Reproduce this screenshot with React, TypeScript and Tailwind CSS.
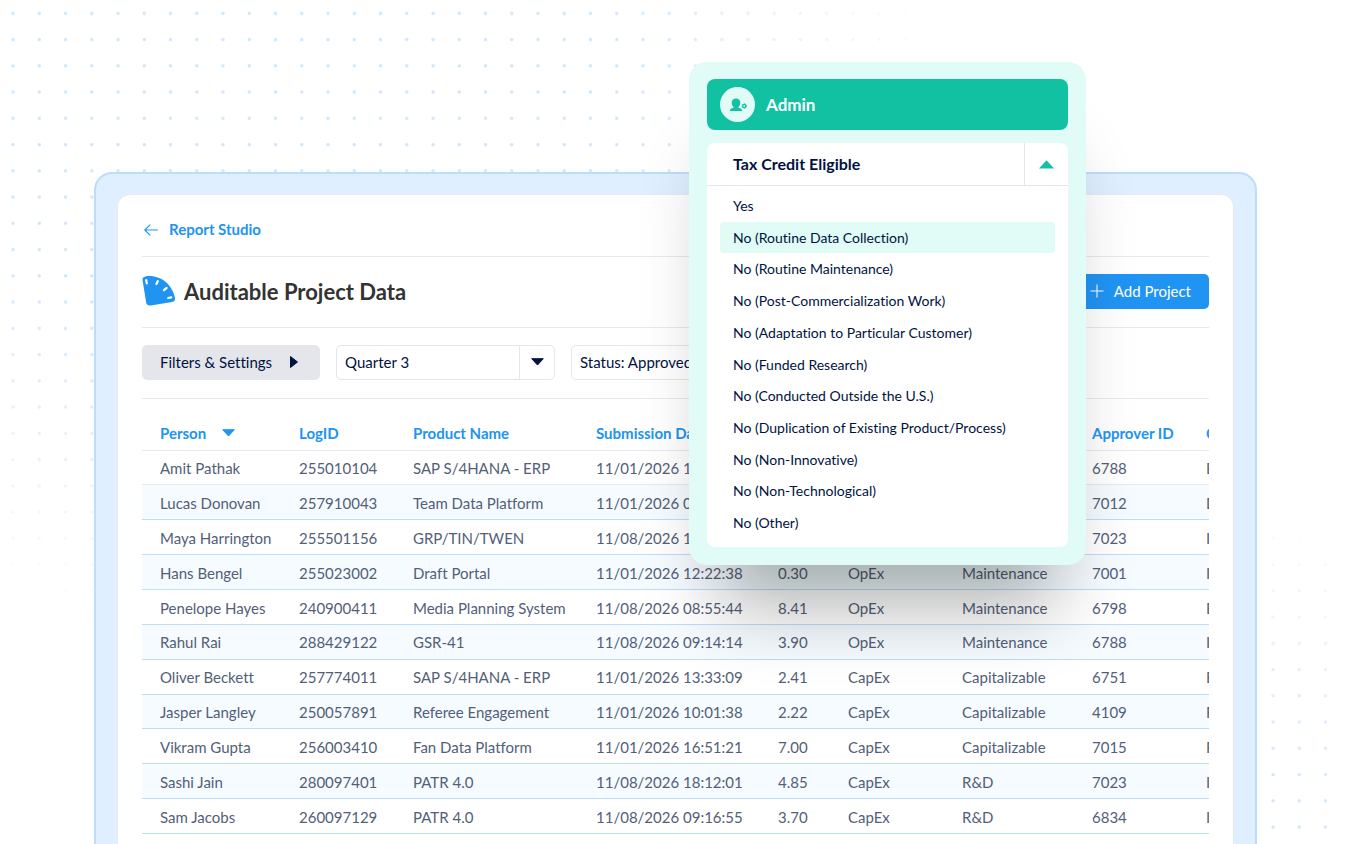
import { useState } from 'react';

type Row = {
  person: string;
  logId: string;
  product: string;
  submitted: string;
  hours?: string;
  expense?: string;
  category?: string;
  approver: string;
  region: string;
};

const rows: Row[] = [
  { person: 'Amit Pathak', logId: '255010104', product: 'SAP S/4HANA - ERP', submitted: '11/01/2026 1', approver: '6788', region: 'E' },
  { person: 'Lucas Donovan', logId: '257910043', product: 'Team Data Platform', submitted: '11/01/2026 0', approver: '7012', region: 'D' },
  { person: 'Maya Harrington', logId: '255501156', product: 'GRP/TIN/TWEN', submitted: '11/08/2026 1', approver: '7023', region: 'I' },
  { person: 'Hans Bengel', logId: '255023002', product: 'Draft Portal', submitted: '11/01/2026 12:22:38', hours: '0.30', expense: 'OpEx', category: 'Maintenance', approver: '7001', region: 'I' },
  { person: 'Penelope Hayes', logId: '240900411', product: 'Media Planning System', submitted: '11/08/2026 08:55:44', hours: '8.41', expense: 'OpEx', category: 'Maintenance', approver: '6798', region: 'E' },
  { person: 'Rahul Rai', logId: '288429122', product: 'GSR-41', submitted: '11/08/2026 09:14:14', hours: '3.90', expense: 'OpEx', category: 'Maintenance', approver: '6788', region: 'I' },
  { person: 'Oliver Beckett', logId: '257774011', product: 'SAP S/4HANA - ERP', submitted: '11/01/2026 13:33:09', hours: '2.41', expense: 'CapEx', category: 'Capitalizable', approver: '6751', region: 'E' },
  { person: 'Jasper Langley', logId: '250057891', product: 'Referee Engagement', submitted: '11/01/2026 10:01:38', hours: '2.22', expense: 'CapEx', category: 'Capitalizable', approver: '4109', region: 'F' },
  { person: 'Vikram Gupta', logId: '256003410', product: 'Fan Data Platform', submitted: '11/01/2026 16:51:21', hours: '7.00', expense: 'CapEx', category: 'Capitalizable', approver: '7015', region: 'F' },
  { person: 'Sashi Jain', logId: '280097401', product: 'PATR 4.0', submitted: '11/08/2026 18:12:01', hours: '4.85', expense: 'CapEx', category: 'R&D', approver: '7023', region: 'I' },
  { person: 'Sam Jacobs', logId: '260097129', product: 'PATR 4.0', submitted: '11/08/2026 09:16:55', hours: '3.70', expense: 'CapEx', category: 'R&D', approver: '6834', region: 'I' },
];

const eligibility = [
  'Yes',
  'No (Routine Data Collection)',
  'No (Routine Maintenance)',
  'No (Post-Commercialization Work)',
  'No (Adaptation to Particular Customer)',
  'No (Funded Research)',
  'No (Conducted Outside the U.S.)',
  'No (Duplication of Existing Product/Process)',
  'No (Non-Innovative)',
  'No (Non-Technological)',
  'No (Other)',
];

export default function App() {
  return (
    <main className="relative flex min-h-screen flex-col overflow-hidden bg-white pt-[172px] pr-[93px] pl-[94px] font-['Lato',sans-serif] text-[#00133f] [font-variant-ligatures:none]">
      <DotGrid />

      <section className="relative flex flex-1 flex-col rounded-t-[18px] border-2 border-b-0 border-[#bbdefb] bg-[#dfefff] px-[21px] pt-5">
        <div className="flex-1 rounded-t-[13px] border border-b-0 border-[#e8eaee] bg-white px-6">
          <nav className="flex h-[62px] items-center border-b border-[#e8e9ec] pt-2">
            <a href="#reports" className="flex items-center gap-[10px] text-[15px] font-bold text-[#2094f3]">
              <BackIcon />
              Report Studio
            </a>
          </nav>

          <header className="flex h-[71px] items-center justify-between border-b border-[#e8e9ec] pb-0.5">
            <h1 className="flex items-center gap-2 text-[22px] font-bold text-[#333333]">
              <GaugeIcon />
              Auditable Project Data
            </h1>
            <button
              type="button"
              className="flex h-[35px] items-center gap-[10px] rounded-[5px] bg-[#2094f3] px-[18px] text-[15px] text-white"
            >
              <PlusIcon />
              Add Project
            </button>
          </header>

          <div className="flex h-[71px] items-center gap-4 border-b border-[#e8e9ec] pb-0.5">
            <button
              type="button"
              className="flex h-[35px] w-[178px] items-center justify-between rounded-[5px] bg-[#e5e6eb] pr-[22px] pl-[18px] text-[15px]"
            >
              Filters &amp; Settings
              <svg width="8" height="12" viewBox="0 0 8 12" aria-hidden="true">
                <path d="M0.5 0.5 L7.5 6 L0.5 11.5 Z" fill="#00133f" stroke="#00133f" strokeLinejoin="round" />
              </svg>
            </button>
            <FilterSelect label="Period" value="Quarter 3" />
            <FilterSelect label="Status" value="Status: Approved" />
          </div>

          <div className="overflow-hidden">
            <ProjectTable />
          </div>
        </div>
      </section>

      <EligibilityMenu />
    </main>
  );
}

function FilterSelect({ label, value }: { label: string; value: string }) {
  return (
    <div className="relative flex h-[35px] w-[219px] items-stretch rounded-[5px] border border-[#e5e6eb] bg-white">
      <select aria-label={label} className="w-full appearance-none bg-transparent pl-2 text-[15px] outline-none">
        <option>{value}</option>
      </select>
      <span className="pointer-events-none absolute inset-y-0 right-0 flex w-[35px] items-center justify-center border-l border-[#e5e6eb]">
        <CaretDown className="text-[#00133f]" />
      </span>
    </div>
  );
}

function ProjectTable() {
  return (
    <table className="h-[435px] w-[1230px] table-fixed border-collapse text-left text-[15px] whitespace-nowrap text-[#535e78]">
      <colgroup>
        <col className="w-[157px]" />
        <col className="w-[114px]" />
        <col className="w-[183px]" />
        <col className="w-[182px]" />
        <col className="w-[70px]" />
        <col className="w-[114px]" />
        <col className="w-[130px]" />
        <col className="w-[114px]" />
        <col />
      </colgroup>
      <thead>
        <tr className="h-[51px] border-b border-[#e8e9ec] text-[#2094f3] *:pt-[18px] *:font-bold">
          <th className="pl-[18px]" aria-sort="descending">
            <button type="button" className="flex items-center gap-4">
              Person
              <CaretDown className="text-[#2094f3]" />
            </button>
          </th>
          <th>LogID</th>
          <th>Product Name</th>
          <th>Submission Date</th>
          <th />
          <th />
          <th />
          <th>Approver ID</th>
          <th>C</th>
        </tr>
      </thead>
      <tbody>
        {rows.map((row) => (
          <tr
            key={row.logId}
            className="h-[34px] border-b border-[#bbdefb] *:pt-0.5 first:border-[#e8e9ec] even:bg-[#f5fbff]"
          >
            <td className="pl-[18px]">{row.person}</td>
            <td>{row.logId}</td>
            <td>{row.product}</td>
            <td>{row.submitted}</td>
            <td>{row.hours}</td>
            <td>{row.expense}</td>
            <td>{row.category}</td>
            <td>{row.approver}</td>
            <td>{row.region}</td>
          </tr>
        ))}
      </tbody>
    </table>
  );
}

function EligibilityMenu() {
  const [selected, setSelected] = useState(eligibility[1]);

  return (
    <aside className="absolute top-[62px] left-1/2 ml-[14px] w-[397px] rounded-[18px] bg-[#e1fbf6] px-[18px] pt-[17px] pb-[18px] shadow-[0_70px_70px_-30px_rgba(0,10,5,0.32)]">
      <div className="flex h-[51px] items-center gap-[11px] rounded-lg bg-[#12c1a2] px-[13px]">
        <span className="flex size-[35px] items-center justify-center rounded-full bg-[#e1fbf6]">
          <AdminIcon />
        </span>
        <h2 className="text-[17px] font-bold text-white">Admin</h2>
      </div>

      <div className="mt-[13px] rounded-lg bg-white">
        <button
          type="button"
          aria-expanded="true"
          className="flex h-[43px] w-full items-stretch border-b border-[#e5e6eb] text-left"
        >
          <span className="flex flex-1 items-center pl-[26px] text-base font-bold">Tax Credit Eligible</span>
          <span className="flex w-11 items-center justify-center border-l border-[#e5e6eb]">
            <svg width="15" height="9" viewBox="0 0 15 9" aria-hidden="true">
              <path d="M7.5 0.3 L15 8.4 H0 Z" fill="#12c1a2" />
            </svg>
          </span>
        </button>
        <ul className="flex h-[361px] flex-col px-[13px] pt-[4px] pb-2">
          {eligibility.map((option) => (
            <li key={option} className="flex flex-1">
              <button
                type="button"
                onClick={() => setSelected(option)}
                className={`w-full rounded px-[13px] text-left text-sm ${
                  option === selected ? 'bg-[#e1fbf6]' : ''
                }`}
              >
                {option}
              </button>
            </li>
          ))}
        </ul>
      </div>
    </aside>
  );
}

function DotGrid() {
  return (
    <svg className="pointer-events-none absolute inset-0 h-full w-full" aria-hidden="true">
      <defs>
        <pattern id="dots" width="26.25" height="26.25" patternUnits="userSpaceOnUse">
          <circle cx="13" cy="13.4" r="1.7" fill="#cbe6fc" />
        </pattern>
        <radialGradient
          id="fadeTop"
          gradientUnits="userSpaceOnUse"
          cx="0"
          cy="0"
          r="1"
          gradientTransform="translate(300 100) scale(650 560)"
        >
          <stop offset="0.5" stopColor="#fff" />
          <stop offset="1" stopColor="#fff" stopOpacity="0" />
        </radialGradient>
        <radialGradient
          id="fadeBottom"
          gradientUnits="userSpaceOnUse"
          cx="0"
          cy="0"
          r="1"
          gradientTransform="translate(1100 900) scale(500 430)"
        >
          <stop offset="0.45" stopColor="#fff" />
          <stop offset="1" stopColor="#fff" stopOpacity="0" />
        </radialGradient>
        <mask id="dotFade" maskUnits="userSpaceOnUse" x="0" y="0" width="100%" height="100%">
          <rect width="100%" height="100%" fill="url(#fadeTop)" />
          <rect width="100%" height="100%" fill="url(#fadeBottom)" />
        </mask>
      </defs>
      <rect width="100%" height="100%" fill="url(#dots)" mask="url(#dotFade)" />
    </svg>
  );
}

function CaretDown({ className }: { className: string }) {
  return (
    <svg width="13" height="8" viewBox="0 0 13 8" className={className} aria-hidden="true">
      <path d="M0.7 0.7 H12.3 L6.5 7 Z" fill="currentColor" stroke="currentColor" strokeLinejoin="round" />
    </svg>
  );
}

function BackIcon() {
  return (
    <svg width="17" height="14" viewBox="0 0 17 14" fill="none" aria-hidden="true">
      <path
        d="M15.5 7 H2.8 M8 1.8 L2.8 7 L8 12.2"
        stroke="currentColor"
        strokeWidth="1.1"
        strokeLinecap="round"
        strokeLinejoin="round"
      />
    </svg>
  );
}

function PlusIcon() {
  return (
    <svg width="14" height="14" viewBox="0 0 14 14" fill="none" aria-hidden="true">
      <path d="M7 0.5 V13.5 M0.5 7 H13.5" stroke="currentColor" strokeWidth="1.1" />
    </svg>
  );
}

function GaugeIcon() {
  return (
    <svg width="34" height="30" viewBox="0 0 34 30" fill="none" aria-hidden="true">
      <path
        d="M0.6 4.6 C0.2 2.2 1.2 0.8 3.4 0.4 C17.5 -1.8 30.6 8 32.9 22 C33.3 24.2 32.4 25.5 30.2 25.9 L8.6 29.5 C6.4 29.9 4.6 28.9 4.2 26.8 Z"
        fill="#2094f3"
      />
      <path
        d="M4.2 4.2 L4.8 7.4 M15.8 5.2 L14.4 8 M24.7 11.9 L22 14.2 M29.2 21.4 L26.2 22"
        stroke="#fff"
        strokeWidth="2.2"
        strokeLinecap="round"
      />
    </svg>
  );
}

function AdminIcon() {
  return (
    <svg width="18" height="14" viewBox="0 0 18 14" aria-hidden="true">
      <path
        d="M7 0.5 C9.7 0.5 11.3 2.4 11.3 4.8 C11.3 6.6 10.5 8.1 9.4 8.9 V9.8 C11.5 10.4 13.2 11 13.2 13 H0.8 C0.8 11 2.5 10.4 4.6 9.8 V8.9 C3.5 8.1 2.7 6.6 2.7 4.8 C2.7 2.4 4.3 0.5 7 0.5 Z"
        fill="#12c1a2"
      />
      <circle cx="15.2" cy="8" r="2.4" stroke="#12c1a2" strokeWidth="0.8" strokeDasharray="1.25 1.25" fill="none" />
      <circle cx="15.2" cy="8" r="1.6" stroke="#12c1a2" strokeWidth="1.3" fill="none" />
    </svg>
  );
}
